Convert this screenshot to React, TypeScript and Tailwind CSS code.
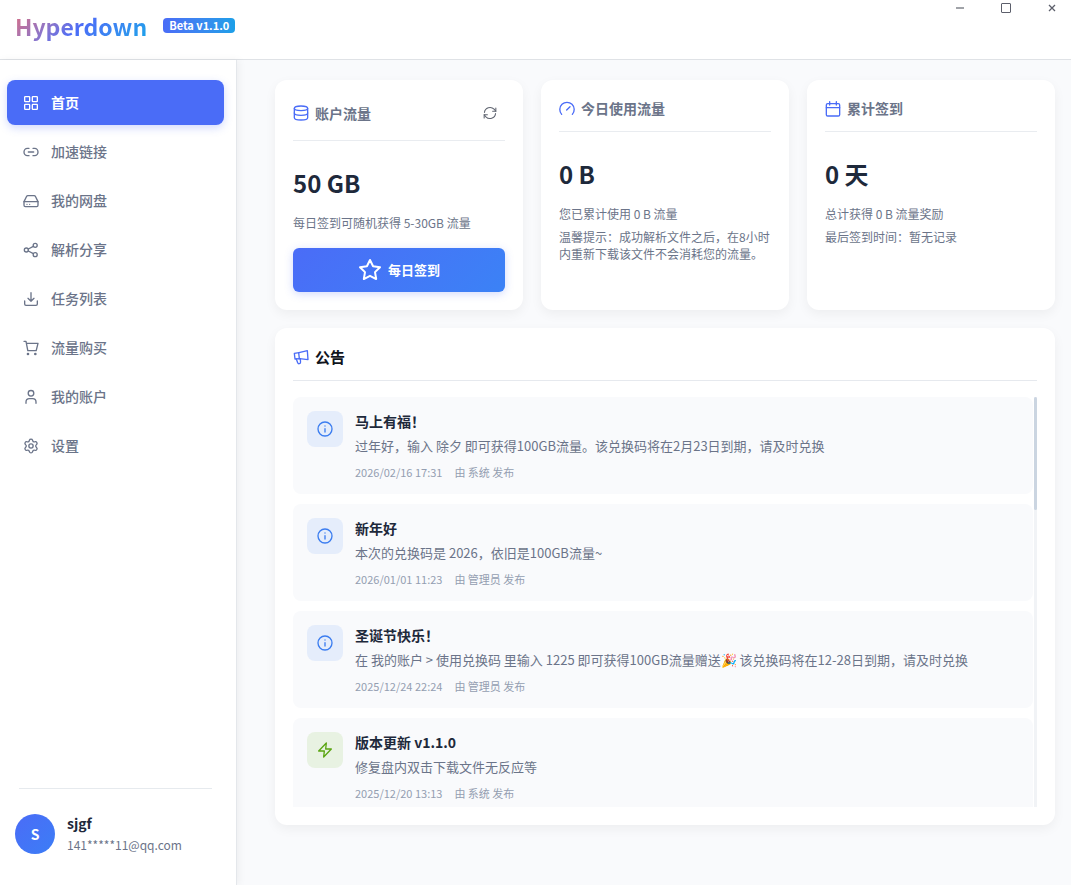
import React from 'react';

type IconProps = { className?: string; children: React.ReactNode; stroke?: number };

function Icon({ className = 'size-4', children, stroke = 2 }: IconProps) {
  return (
    <svg
      viewBox="0 0 24 24"
      fill="none"
      stroke="currentColor"
      strokeWidth={stroke}
      strokeLinecap="round"
      strokeLinejoin="round"
      aria-hidden="true"
      className={`shrink-0 ${className}`}
    >
      {children}
    </svg>
  );
}

const navItems: { label: string; icon: React.ReactNode }[] = [
  {
    label: '首页',
    icon: (
      <>
        <rect x="2.500" y="2.500" width="7.500" height="7.500" rx="1" />
        <rect x="14" y="2.500" width="7.500" height="7.500" rx="1" />
        <rect x="2.500" y="14" width="7.500" height="7.500" rx="1" />
        <rect x="14" y="14" width="7.500" height="7.500" rx="1" />
      </>
    ),
  },
  {
    label: '加速链接',
    icon: (
      <>
        <path d="M9 6.500H6.500a5 5.500 0 0 0 0 11H9" />
        <path d="M15 6.500h2.500a5 5.500 0 0 1 0 11H15" />
        <path d="M8 12h8" />
      </>
    ),
  },
  {
    label: '我的网盘',
    icon: (
      <>
        <path d="M1.500 13 5.300 5.200A2.200 2.200 0 0 1 7.300 4h9.400a2.200 2.200 0 0 1 2 1.200L22.500 13v5.500a2 2 0 0 1-2 2h-17a2 2 0 0 1-2-2z" />
        <path d="M1.500 13h21M6 17h.01M10 17h.01" />
      </>
    ),
  },
  {
    label: '解析分享',
    icon: (
      <>
        <circle cx="5" cy="12" r="3" />
        <circle cx="18.300" cy="5" r="3" />
        <circle cx="18.300" cy="19" r="3" />
        <path d="m8 10.500 7.500-4M8 13.500l7.500 4" />
      </>
    ),
  },
  {
    label: '任务列表',
    icon: (
      <>
        <path d="M12 2.500v13M7.500 11l4.500 4.500 4.500-4.500" />
        <path d="M2.500 15v4.500a2 2 0 0 0 2 2h15a2 2 0 0 0 2-2V15" />
      </>
    ),
  },
  {
    label: '流量购买',
    icon: (
      <>
        <path d="M1.500 2h3l2.700 14h12.600l2.700-11H5.200" />
        <circle cx="7.500" cy="21" r="1" fill="currentColor" />
        <circle cx="18.500" cy="21" r="1" fill="currentColor" />
      </>
    ),
  },
  {
    label: '我的账户',
    icon: (
      <>
        <circle cx="12" cy="6.500" r="4.200" />
        <path d="M4.500 21.500v-2a5 5 0 0 1 5-5h5a5 5 0 0 1 5 5v2" />
      </>
    ),
  },
  {
    label: '设置',
    icon: (
      <>
        <path d="M9.700 3.200c.6-2 4-2 4.600 0l.3 1a2.200 2.200 0 0 0 2.700 1.500l1-.2c2-.5 3.700 2.400 2.300 3.900l-.8.900a2.400 2.400 0 0 0 0 3.400l.8.900c1.400 1.500-.3 4.400-2.300 3.900l-1-.2a2.200 2.200 0 0 0-2.700 1.500l-.3 1c-.6 2-4 2-4.600 0l-.3-1a2.200 2.200 0 0 0-2.700-1.500l-1 .2c-2 .5-3.700-2.400-2.300-3.900l.8-.9a2.400 2.400 0 0 0 0-3.400l-.8-.9C2 7.900 3.700 5 5.700 5.500l1 .2a2.200 2.200 0 0 0 2.700-1.500z" />
        <circle cx="12" cy="12" r="3.200" />
      </>
    ),
  },
];

const notices = [
  {
    title: '马上有福！',
    body: '过年好，输入 除夕 即可获得100GB流量。该兑换码将在2月23日到期，请及时兑换',
    time: '2026/02/16 17:31',
    author: '由 系统 发布',
    kind: 'info',
  },
  {
    title: '新年好',
    body: '本次的兑换码是 2026，依旧是100GB流量~',
    time: '2026/01/01 11:23',
    author: '由 管理员 发布',
    kind: 'info',
  },
  {
    title: '圣诞节快乐！',
    body: '在 我的账户 > 使用兑换码 里输入 1225 即可获得100GB流量赠送🎉 该兑换码将在12-28日到期，请及时兑换',
    time: '2025/12/24 22:24',
    author: '由 管理员 发布',
    kind: 'info',
  },
  {
    title: '版本更新 v1.1.0',
    body: '修复盘内双击下载文件无反应等',
    time: '2025/12/20 13:13',
    author: '由 系统 发布',
    kind: 'update',
  },
];

function Header() {
  return (
    <header className="flex h-[60px] shrink-0 items-start justify-between border-b border-[#dfe2e6] bg-white">
      <div className="flex items-start pt-[9px] pl-[15px]">
        <h1 className="bg-linear-135 from-[#e0697a] via-[#4a6cf7] via-50% to-[#0ea5e9] bg-clip-text text-[23px] leading-[34px] font-bold text-transparent">
          Hyperdown
        </h1>
        <span className="mt-[9px] ml-4 rounded bg-linear-to-r from-[#4a6cf7] to-[#1b9fe8] px-1.5 text-[11px] leading-[15px] font-bold text-white">
          Beta v1.1.0
        </span>
      </div>
      <div className="flex gap-2 text-[#5c5f6b]">
        <button aria-label="最小化" className="flex h-4 w-[38px] items-center justify-center">
          <svg viewBox="0 0 12 12" className="size-3" stroke="#a0a3a8" strokeWidth="2">
            <path d="M2 6h8" />
          </svg>
        </button>
        <button aria-label="最大化" className="flex h-4 w-[38px] items-center justify-center">
          <svg viewBox="0 0 12 12" className="size-3" fill="none" stroke="currentColor">
            <rect x="1.500" y="1.500" width="9" height="9" rx="0.500" />
          </svg>
        </button>
        <button aria-label="关闭" className="flex h-4 w-[38px] items-center justify-center">
          <svg viewBox="0 0 12 12" className="size-3" fill="none" stroke="currentColor" strokeWidth="1.300">
            <path d="m3 3 6 6M9 3 3 9" />
          </svg>
        </button>
      </div>
    </header>
  );
}

function Sidebar() {
  return (
    <aside className="z-10 flex w-[237px] shrink-0 flex-col border-r border-[#e4e7eb] bg-white shadow-[2px_0_8px_rgba(0,0,0,0.05)]">
      <nav className="flex flex-col gap-1 pt-5 pr-3 pl-[7px]">
        {navItems.map((item, i) => (
          <a
            key={item.label}
            href="#"
            className={
              i === 0
                ? 'flex h-[45px] items-center gap-3 rounded-lg bg-[#4a6cf7] px-4 text-sm font-bold text-white shadow-[0_3px_8px_rgba(74,108,247,0.25)]'
                : 'flex h-[45px] items-center gap-3 rounded-lg px-4 text-sm font-medium text-[#6b7489]'
            }
          >
            <Icon>{item.icon}</Icon>
            <span className="pb-0.5">{item.label}</span>
          </a>
        ))}
      </nav>
      <div className="mt-auto">
        <div className="mr-6 ml-[19px] border-t border-[#e6eaee]" />
        <div className="flex items-center gap-3 pt-6 pb-[30px] pl-[15px]">
          <div className="flex size-10 items-center justify-center rounded-full bg-linear-135 from-[#4a6cf7] to-[#3b7df6] text-sm font-bold text-white">
            S
          </div>
          <div>
            <div className="text-sm leading-[21px] font-bold text-[#1e293b]">sjgf</div>
            <div className="text-xs leading-[21px] text-[#6b7489]">141*****11@qq.com</div>
          </div>
        </div>
      </div>
    </aside>
  );
}

type StatProps = {
  title: string;
  icon: React.ReactNode;
  value: string;
  desc: string;
  action?: React.ReactNode;
  children?: React.ReactNode;
};

function StatCard({ title, icon, value, desc, action, children }: StatProps) {
  return (
    <section className="rounded-xl bg-white p-[18px] shadow-[0_4px_12px_rgba(0,0,0,0.05)]">
      <div className="flex items-center justify-between border-b border-[#e9ecf0] pb-3">
        <h2 className="flex items-center gap-1.5 text-sm leading-[21px] font-bold text-[#6b7489]">
          <Icon className="size-4 text-[#4a6cf7]">{icon}</Icon>
          {title}
        </h2>
        {action}
      </div>
      <p className="mt-6 text-2xl leading-9 font-bold text-[#1e293b]">{value}</p>
      <p className="mt-[13px] text-xs leading-[17px] text-[#6b7489]">{desc}</p>
      {children}
    </section>
  );
}

function Stats() {
  return (
    <div className="grid grid-cols-3 gap-[18px]">
      <StatCard
        title="账户流量"
        value="50 GB"
        desc="每日签到可随机获得 5-30GB 流量"
        icon={
          <>
            <ellipse cx="12" cy="5" rx="10" ry="3.500" />
            <path d="M2 5v14c0 2 4.500 3.500 10 3.500S22 21 22 19V5" />
            <path d="M2 12c0 2 4.500 3.500 10 3.500S22 14 22 12" />
          </>
        }
        action={
          <button aria-label="刷新" className="flex size-[30px] items-center justify-center text-[#5f6470]">
            <Icon className="size-3.5" stroke={1.8}>
              <path d="M22 3.500v5.500h-5.500M2 20.500V15h5.500" />
              <path d="M2.500 11A9.600 9.600 0 0 1 19 5.500L22 9M21.500 13A9.600 9.600 0 0 1 5 18.500L2 15" />
            </Icon>
          </button>
        }
      >
        <button className="mt-[17px] flex h-11 w-full items-center justify-center gap-1.5 rounded-md bg-linear-135 from-[#4a6cf7] to-[#3b82f6] text-[13px] font-bold text-white shadow-[0_2px_8px_rgba(74,108,247,0.25)]">
          <Icon className="size-6" stroke={2}>
            <path d="m12 2 3.090 6.260L22 9.270l-5 4.870 1.180 6.880L12 17.770l-6.180 3.250L7 14.140 2 9.270l6.910-1.010z" />
          </Icon>
          每日签到
        </button>
      </StatCard>
      <StatCard
        title="今日使用流量"
        value="0 B"
        desc="您已累计使用 0 B 流量"
        icon={
          <>
            <path d="M4 20a10.800 10.800 0 1 1 16 0" />
            <path d="m11.500 13.500 5-5" />
          </>
        }
      >
        <p className="mt-1.5 text-xs leading-[17px] text-[#6b7489]">
          温馨提示：成功解析文件之后，在8小时内重新下载该文件不会消耗您的流量。
        </p>
      </StatCard>
      <StatCard
        title="累计签到"
        value="0 天"
        desc="总计获得 0 B 流量奖励"
        icon={
          <>
            <rect x="2" y="4" width="20" height="18.500" rx="2" />
            <path d="M7 1v5M17 1v5M2 10h20" />
          </>
        }
      >
        <p className="mt-1.5 text-xs leading-[17px] text-[#6b7489]">最后签到时间：暂无记录</p>
      </StatCard>
    </div>
  );
}

function Notices() {
  return (
    <section className="mt-[18px] rounded-xl bg-white p-[18px] shadow-[0_4px_12px_rgba(0,0,0,0.05)]">
      <h2 className="flex items-center gap-1.5 border-b border-[#e6e9ee] pb-[13px] text-[15px] leading-[21px] font-bold text-[#11151d]">
        <Icon className="size-4 text-[#4a6cf7]">
          <path d="M2 6.500 9 5.500 21.500 2.500 22.500 16 10 14.500l-7 .5z" />
          <path d="M8.500 5.500 9.500 14.500M5 15l2 5.500a2.200 2.200 0 0 0 4.300-.9L11 14.500" />
        </Icon>
        公告
      </h2>
      <div className="mt-4 flex max-h-[410px] overflow-hidden">
        <ul className="flex min-w-0 flex-1 flex-col gap-[10px]">
          {notices.map((n) => (
            <li key={n.title} className="flex shrink-0 gap-3 rounded-lg bg-[#f9fafc] p-[14px]">
              <div
                className={
                  n.kind === 'info'
                    ? 'flex size-9 shrink-0 items-center justify-center rounded-lg bg-[#e5edfb] text-[#3b7df0]'
                    : 'flex size-9 shrink-0 items-center justify-center rounded-lg bg-[#e8f2e2] text-[#5aa512]'
                }
              >
                <Icon>
                  {n.kind === 'info' ? (
                    <>
                      <circle cx="12" cy="12" r="10.500" />
                      <path d="M12 11.500v5M12 7.500h.01" />
                    </>
                  ) : (
                    <path d="M14 1.500 2.500 13.500H11L10 22.500 21.500 10.500H13z" />
                  )}
                </Icon>
              </div>
              <div className="min-w-0">
                <h3 className="text-sm leading-5 font-bold text-[#1e293b]">{n.title}</h3>
                <p className="mt-[5px] text-[13px] leading-5 text-[#6b7489]">{n.body}</p>
                <p className="mt-2 flex gap-3 text-[11px] leading-4 text-[#949eb1]">
                  <span>{n.time}</span>
                  <span>{n.author}</span>
                </p>
              </div>
            </li>
          ))}
        </ul>
        <div className="ml-px w-[3px] bg-[#f1f3f6]">
          <div className="h-[113px] rounded-sm bg-[#cbd5e1]" />
        </div>
      </div>
    </section>
  );
}

export default function App() {
  return (
    <div className="flex h-screen flex-col overflow-hidden bg-[#f9fafc] font-['Noto_Sans_CJK_SC','Noto_Sans',sans-serif]">
      <Header />
      <div className="flex min-h-0 flex-1">
        <Sidebar />
        <main className="min-w-0 flex-1 overflow-hidden pt-5 pr-4 pl-[38px]">
          <Stats />
          <Notices />
        </main>
      </div>
    </div>
  );
}
